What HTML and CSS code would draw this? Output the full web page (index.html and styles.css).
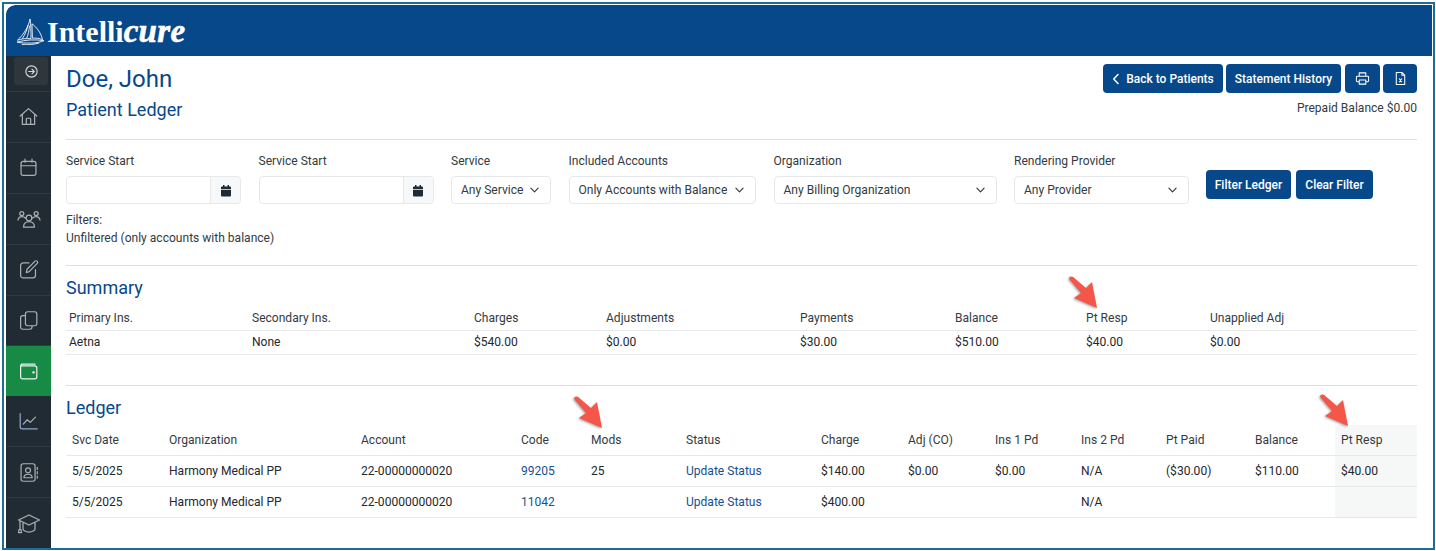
FILE: index.html
```html
<!DOCTYPE html>
<html lang="en">
<head>
<meta charset="utf-8">
<title>Patient Ledger</title>
<link rel="stylesheet" href="styles.css">
</head>
<body>
<div class="frame">
  <div class="app">
    <header class="topbar">
      <svg class="boat" viewBox="0 0 30 28" fill="none" stroke="#fff" stroke-width=".9">
        <path d="M14.500 1 C13 9 8 17 1.500 23 C6 21.500 11 21 15.500 21.500 C15.500 14 15.500 7 14.500 1Z"/>
        <path d="M12.500 7 C11.500 12 9.500 17 6.500 21.500M14 8 C13.500 13 12.500 18 11 21"/>
        <path d="M16.500 6 C22 10 26 16 27.500 22.500 C24 21 20 20.500 17 21Z"/>
        <path d="M1 25 C10 22.500 20 22 29 23.500 C25 25 21 26 16 26 C10 26 5 26 1 25Z"/>
        <path d="M6 27.500 C12 28 18 27.500 24 26"/>
      </svg>
      <div class="brand">Intelli<em>cure</em></div>
    </header>
    <div class="body">
      <nav class="side">
        <div class="toggle-wrap">
          <div class="toggle">
            <svg class="ico-sm" viewBox="0 0 16 16" fill="none" stroke="#d6d9dc" stroke-width="1.2" stroke-linecap="round" stroke-linejoin="round"><circle cx="8" cy="8" r="6"/><path d="M5 8h6M8.500 5.500 11 8l-2.500 2.500"/></svg>
          </div>
        </div>
        <a class="nav-item"><svg viewBox="0 0 24 24"><path d="M2.500 11.500 12 3l9.500 8.500M5 9.500V21h14V9.500M9.500 21v-6a1 1 0 0 1 1-1h3a1 1 0 0 1 1 1v6"/></svg></a>
        <a class="nav-item"><svg viewBox="0 0 24 24"><rect x="3.500" y="5" width="17" height="16" rx="2.500"/><path d="M3.500 10h17M8 2.500V6M16 2.500V6"/></svg></a>
        <a class="nav-item nav-wide"><svg viewBox="0 0 24 24"><circle cx="12" cy="11" r="2.800"/><circle cx="4.800" cy="6.500" r="2"/><circle cx="19.200" cy="6.500" r="2"/><path d="M1 13c.5-2.500 2-3.500 3.800-3.500S7.500 10 8.500 11M23 13c-.5-2.500-2-3.500-3.800-3.500S16.500 10 15.500 11M6.500 20c0-3.500 2.500-5.500 5.500-5.500s5.500 2 5.500 5.500z"/></svg></a>
        <a class="nav-item"><svg viewBox="0 0 24 24"><path d="M12.500 4.500H6a3 3 0 0 0-3 3V19a2.500 2.500 0 0 0 2.500 2.500H17a3 3 0 0 0 3-3V12"/><path d="M9.500 15.500l.8-3.800L19.500 2.500a1.600 1.600 0 0 1 2.300 0l.2.200a1.600 1.600 0 0 1 0 2.300L12.800 14.500z"/></svg></a>
        <a class="nav-item"><svg viewBox="0 0 24 24"><rect x="8.500" y="2" width="13" height="16" rx="2.500"/><path d="M8.500 6.500H5.500A2.500 2.500 0 0 0 3 9v10.500A2.500 2.500 0 0 0 5.500 22h8a2.500 2.500 0 0 0 2.500-2.500V18"/></svg></a>
        <a class="nav-item active"><svg viewBox="0 0 24 24"><path d="M4 3.500h15.500M3 5.500A2 2 0 0 1 5 3.500M3 5.500V18a2.500 2.500 0 0 0 2.500 2.500H19a2.500 2.500 0 0 0 2.500-2.500V8A2.500 2.500 0 0 0 19 5.500z"/><path d="M17.500 13h.5" stroke-width="2.400" stroke-linecap="round"/></svg></a>
        <a class="nav-item"><svg viewBox="0 0 24 24"><path d="M2.500 3v15a2.500 2.500 0 0 0 2.500 2.500h17" stroke="#8fa9c4"/><path d="M6 15l4.500-5 3.500 3 6-6"/></svg></a>
        <a class="nav-item"><svg viewBox="0 0 24 24"><rect x="3.500" y="2" width="16" height="20" rx="2.500"/><circle cx="11.500" cy="9.500" r="2.800"/><path d="M6.800 18c0-2.800 2-4 4.700-4s4.700 1.200 4.700 4zM22 6v2.500M22 11v2.500M22 16v2.500"/></svg></a>
        <a class="nav-item nav-wide"><svg viewBox="0 0 24 24"><path d="M12 4 1.500 9 12 14l10.500-5zM6 12v6c0 1.500 3 3 6 3s6-1.500 6-3v-6M3 10v8"/><path d="M2 18.500h2l.5 3h-3z"/></svg></a>
      </nav>
      <main class="main">
        <section class="page-head">
          <div>
            <h1 class="name">Doe, John</h1>
            <h2 class="subtitle">Patient Ledger</h2>
          </div>
          <div class="actions">
            <div class="btn-row">
              <button class="btn btn-back"><svg class="chev-left" viewBox="0 0 8 12" fill="none" stroke="#fff" stroke-width="1.500" stroke-linecap="round" stroke-linejoin="round"><path d="M6 1.500 1.700 6 6 10.500"/></svg>Back to Patients</button>
              <button class="btn btn-hist">Statement History</button>
              <button class="btn btn-icon"><svg viewBox="0 0 16 16" fill="none" stroke="#fff" stroke-width="1.100" stroke-linejoin="round"><path d="M4.500 5.500V2h7v3.500M4.500 11.500H2.500a1 1 0 0 1-1-1V6.500a1 1 0 0 1 1-1h11a1 1 0 0 1 1 1v4a1 1 0 0 1-1 1h-2M4.500 9.500h7V14h-7z"/></svg></button>
              <button class="btn btn-icon btn-xls"><svg viewBox="0 0 16 16" fill="none" stroke="#fff" stroke-width="1.100" stroke-linejoin="round"><path d="M3.500 1.500h6l3 3v10h-9zM9.500 1.500v3h3M6.500 8l3 4M9.500 8l-3 4"/></svg></button>
            </div>
            <div class="prepaid">Prepaid Balance $0.00</div>
          </div>
        </section>

        <section class="filters">
          <div class="field w175">
            <label>Service Start</label>
            <div class="control date"><span class="date-input"></span><span class="addon"><svg viewBox="0 0 12 12"><path fill="#1d2b36" d="M3 .5h1.500V2h3V.5H9V2h1a1 1 0 0 1 1 1v1.500H1V3a1 1 0 0 1 1-1h1zM1 5.300h10V11a1 1 0 0 1-1 1H2a1 1 0 0 1-1-1z"/></svg></span></div>
          </div>
          <div class="field w175">
            <label>Service Start</label>
            <div class="control date"><span class="date-input"></span><span class="addon"><svg viewBox="0 0 12 12"><path fill="#1d2b36" d="M3 .5h1.500V2h3V.5H9V2h1a1 1 0 0 1 1 1v1.500H1V3a1 1 0 0 1 1-1h1zM1 5.300h10V11a1 1 0 0 1-1 1H2a1 1 0 0 1-1-1z"/></svg></span></div>
          </div>
          <div class="field w100">
            <label>Service</label>
            <div class="control select"><span>Any Service</span><svg class="chev" viewBox="0 0 10 6"><path d="M1 1l4 4 4-4"/></svg></div>
          </div>
          <div class="field w187">
            <label>Included Accounts</label>
            <div class="control select"><span>Only Accounts with Balance</span><svg class="chev" viewBox="0 0 10 6"><path d="M1 1l4 4 4-4"/></svg></div>
          </div>
          <div class="field w223">
            <label>Organization</label>
            <div class="control select"><span>Any Billing Organization</span><svg class="chev" viewBox="0 0 10 6"><path d="M1 1l4 4 4-4"/></svg></div>
          </div>
          <div class="field w175">
            <label>Rendering Provider</label>
            <div class="control select"><span>Any Provider</span><svg class="chev" viewBox="0 0 10 6"><path d="M1 1l4 4 4-4"/></svg></div>
          </div>
          <div class="filter-btns">
            <button class="btn btn-filter">Filter Ledger</button>
            <button class="btn btn-clear">Clear Filter</button>
          </div>
        </section>
        <div class="filter-note">Filters:<br>Unfiltered (only accounts with balance)</div>

        <section class="block block-summary">
          <h3 class="section-title">Summary</h3>
          <table class="grid summary">
            <colgroup><col class="s1"><col class="s2"><col class="s3"><col class="s4"><col class="s5"><col class="s6"><col class="s7"><col class="s8"></colgroup>
            <thead><tr><th>Primary Ins.</th><th>Secondary Ins.</th><th>Charges</th><th>Adjustments</th><th>Payments</th><th>Balance</th><th>Pt Resp</th><th>Unapplied Adj</th></tr></thead>
            <tbody><tr><td>Aetna</td><td>None</td><td>$540.00</td><td>$0.00</td><td>$30.00</td><td>$510.00</td><td>$40.00</td><td>$0.00</td></tr></tbody>
          </table>
        </section>

        <section class="block block-ledger">
          <h3 class="section-title">Ledger</h3>
          <table class="grid ledger">
            <colgroup><col class="l1"><col class="l2"><col class="l3"><col class="l4"><col class="l5"><col class="l6"><col class="l7"><col class="l8"><col class="l9"><col class="l10"><col class="l11"><col class="l12"><col class="l13"></colgroup>
            <thead><tr><th>Svc Date</th><th>Organization</th><th>Account</th><th>Code</th><th>Mods</th><th>Status</th><th>Charge</th><th>Adj (CO)</th><th>Ins 1 Pd</th><th>Ins 2 Pd</th><th>Pt Paid</th><th>Balance</th><th class="hl">Pt Resp</th></tr></thead>
            <tbody>
              <tr><td>5/5/2025</td><td>Harmony Medical PP</td><td>22-00000000020</td><td><a class="link">99205</a></td><td>25</td><td><a class="link">Update Status</a></td><td>$140.00</td><td>$0.00</td><td>$0.00</td><td>N/A</td><td>($30.00)</td><td>$110.00</td><td class="hl">$40.00</td></tr>
              <tr class="row-last"><td>5/5/2025</td><td>Harmony Medical PP</td><td>22-00000000020</td><td><a class="link">11042</a></td><td></td><td><a class="link">Update Status</a></td><td>$400.00</td><td></td><td></td><td>N/A</td><td></td><td></td><td class="hl"></td></tr>
            </tbody>
          </table>
        </section>

        <svg class="arrow arrow-a" viewBox="0 0 32 36"><path d="M2.500 4.500 Q1.500 2.800 3.200 1.800 Q5 1 6.200 2 L19 13 L25 7 L30 33 L7 23 L14 18 Z"/></svg>
        <svg class="arrow arrow-b" viewBox="0 0 32 36"><path d="M2.500 4.500 Q1.500 2.800 3.200 1.800 Q5 1 6.200 2 L19 13 L25 7 L30 33 L7 23 L14 18 Z"/></svg>
        <svg class="arrow arrow-c" viewBox="0 0 32 36"><path d="M2.500 4.500 Q1.500 2.800 3.200 1.800 Q5 1 6.200 2 L19 13 L25 7 L30 33 L7 23 L14 18 Z"/></svg>
      </main>
    </div>
  </div>
</div>
</body>
</html>
```
FILE: styles.css
```css
* { box-sizing: border-box; }
html, body { margin: 0; height: 100%; background: #fff; overflow: hidden; }
body { padding: 2px 1px 1px 2px; font-family: Roboto, "Liberation Sans", sans-serif; font-size: 12.050px; color: #333b42; }

.frame { height: 548px; border: 2px solid #1b6f96; padding: 1px 1px 0 2px; background: #fff; }
.app { height: 100%; display: flex; flex-direction: column; border-radius: 9px 0 0 0; overflow: hidden; }

.topbar { height: 51px; flex: none; background: #07488b; display: flex; align-items: center; padding: 1px 0 0 10px; border-radius: 9px 0 0 0; }
.boat { width: 29px; height: 27px; flex: none; }
.brand { font-family: "Liberation Serif", serif; font-weight: 700; font-size: 30px; color: #fff; line-height: 1; margin-left: 2px; }
.brand em { font-style: italic; font-weight: 700; font-size: 33px; letter-spacing: .3px; -webkit-text-stroke: .6px #fff; }

.body { flex: 1; min-height: 0; display: flex; }
.side { width: 45px; flex: none; background: #212b33; display: flex; flex-direction: column; }
.toggle-wrap { height: 36px; flex: none; padding: 1px 3px 0 8px; border-bottom: 1px solid #2f3a43; }
.toggle { width: 34px; height: 28px; background: #2e373e; border-radius: 3px; display: flex; align-items: center; justify-content: center; }
.ico-sm { width: 15px; height: 15px; }
.nav-item { flex: 1; display: flex; align-items: center; justify-content: center; border-bottom: 1px solid #2f3a43; }
.nav-item:last-child { border-bottom: 0; }
.nav-item svg { width: 21px; height: 21px; fill: none; stroke: #aab0b5; stroke-width: 1.400; stroke-linecap: round; stroke-linejoin: round; }
.nav-wide svg { width: 24px; height: 24px; stroke-width: 1.250; }
.nav-item.active { background: #178a45; border-bottom: 0; }
.nav-item.active svg { stroke: #e8f3ec; }

.main { flex: 1; min-width: 0; position: relative; padding: 8px 15px 0 15px; }

.page-head { display: flex; justify-content: space-between; align-items: flex-start; height: 76px; border-bottom: 1px solid #dcdfe2; }
.name { margin: 0; font-size: 24px; font-weight: 400; line-height: 30px; color: #07488b; }
.subtitle { margin: 5px 0 0; font-size: 18px; font-weight: 400; line-height: 22px; color: #07488b; }
.actions { display: flex; flex-direction: column; align-items: flex-end; }
.btn-row { display: flex; gap: 3px; }
.btn { height: 29px; padding: 0; border: 0; border-radius: 4px; background: #07488b; color: #fff; font: 500 12px Roboto, sans-serif; display: inline-flex; align-items: center; justify-content: center; white-space: nowrap; }
.btn-back { width: 120px; }
.btn-hist { width: 115px; }
.chev-left { width: 8px; height: 12px; margin-right: 6px; }
.btn-icon { width: 35px; margin-left: 1px; }
.btn-xls { width: 34px; margin-left: 0; }
.btn-icon svg { width: 15px; height: 15px; }
.prepaid { margin-top: 7px; line-height: 16px; }

.filters { display: flex; gap: 17.500px; padding-top: 13px; align-items: flex-start; }
.field label { display: block; line-height: 16px; margin-bottom: 7px; }
.w175 { width: 175px; }
.w100 { width: 100px; }
.w187 { width: 187.500px; }
.w223 { width: 223px; }
.control { height: 28px; border: 1px solid #e6e8ea; border-radius: 4px; background: #fff; display: flex; align-items: center; }
.date-input { flex: 1; }
.addon { width: 30px; height: 100%; background: #f7f8f9; border-left: 1px solid #e6e8ea; border-radius: 0 4px 4px 0; display: flex; align-items: center; justify-content: center; }
.addon svg { width: 12px; height: 13px; }
.select { justify-content: space-between; padding: 0 11px 0 9px; }
.chev { width: 9px; height: 6px; fill: none; stroke: #333b42; stroke-width: 1.300; stroke-linecap: round; stroke-linejoin: round; }
.filter-btns { display: flex; gap: 5px; margin: 17px 0 0 -.5px; }
.btn-filter { width: 85px; }
.btn-clear { width: 77px; }

.filter-note { margin-top: 7px; line-height: 18px; height: 54px; }

.block { border-top: 1px solid #dcdfe2; }
.block-summary { padding-top: 11px; height: 120px; }
.block-ledger { padding-top: 11px; }
.section-title { margin: 0; font-size: 18px; font-weight: 400; line-height: 22px; color: #07488b; }

.grid { width: 1351px; border-collapse: collapse; table-layout: fixed; }
.grid th { font-weight: 400; text-align: left; color: #333b42; white-space: nowrap; }
.grid td { color: #23282d; white-space: nowrap; }
.grid tr { border-bottom: 1px solid #e6e8ea; }
.summary th, .summary td { padding: 0 3px; height: 24px; }
.summary { margin-top: 6px; }
.summary th { height: 25px; padding-top: 2px; }
.ledger { margin-top: 6px; }
.ledger th, .ledger td { padding: 0 6px; height: 31px; }
.ledger th { height: 30px; }
.hl { background: #f6f7f7; }
.link { color: #16508f; }

.s1 { width: 183px; } .s2 { width: 222px; } .s3 { width: 132px; } .s4 { width: 194px; }
.s5 { width: 155px; } .s6 { width: 131px; } .s7 { width: 124px; } .s8 { width: 210px; }
.l1 { width: 97px; } .l2 { width: 192px; } .l3 { width: 160px; } .l4 { width: 70px; }
.l5 { width: 95px; } .l6 { width: 135px; } .l7 { width: 87px; } .l8 { width: 87px; }
.l9 { width: 86px; } .l10 { width: 85px; } .l11 { width: 89px; } .l12 { width: 86px; } .l13 { width: 82px; }

.arrow { position: absolute; width: 32px; height: 36px; fill: #f4574a; filter: drop-shadow(-1px 1px 1px rgba(0,0,0,.35)); }
.arrow-a { left: 1016px; top: 219px; }
.arrow-b { left: 521px; top: 339px; }
.arrow-c { left: 1267px; top: 337px; }
```
